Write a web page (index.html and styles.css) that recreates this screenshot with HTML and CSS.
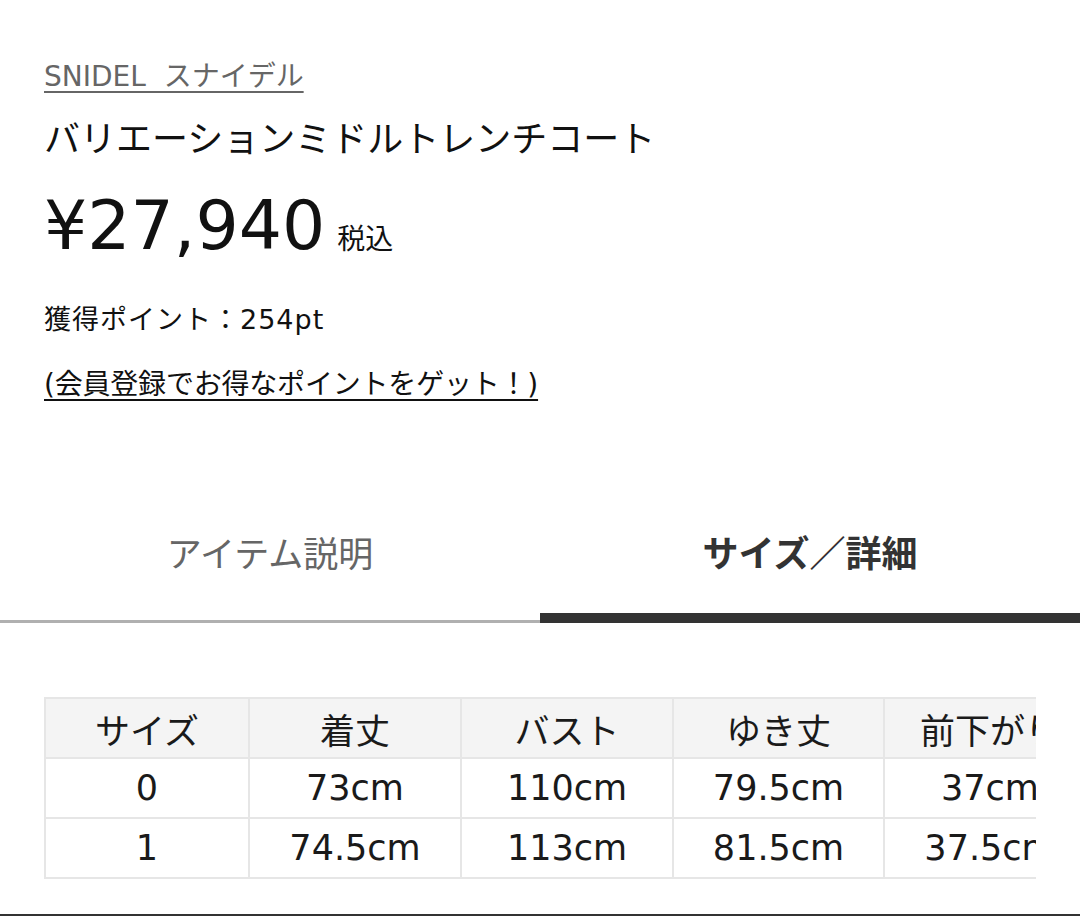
FILE: index.html
```html
<!DOCTYPE html>
<html lang="ja">
<head>
<meta charset="utf-8">
<title>バリエーションミドルトレンチコート</title>
<link rel="stylesheet" href="styles.css">
</head>
<body>
<div class="product">
  <a class="brand" href="#">SNIDEL&nbsp;&nbsp;スナイデル</a>
  <h1 class="title">バリエーションミドルトレンチコート</h1>
  <div class="price"><span class="amount">¥27,940</span><span class="tax">税込</span></div>
  <div class="points">獲得ポイント：254pt</div>
  <a class="signup" href="#">(会員登録でお得なポイントをゲット！)</a>
</div>
<div class="tabs">
  <div class="tab">アイテム説明</div>
  <div class="tab active">サイズ／詳細</div>
</div>
<div class="table-wrap">
  <table class="sizes">
    <tr class="head"><th>サイズ</th><th>着丈</th><th>バスト</th><th>ゆき丈</th><th>前下がり</th></tr>
    <tr><td>0</td><td>73cm</td><td>110cm</td><td>79.5cm</td><td>37cm</td></tr>
    <tr><td>1</td><td>74.5cm</td><td>113cm</td><td>81.5cm</td><td>37.5cm</td></tr>
  </table>
</div>
<div class="bottom-bar"></div>
</body>
</html>
```

FILE: styles.css
```css
html, body {
  margin: 0;
  padding: 0;
  background: #fff;
}
body {
  width: 1080px;
  height: 916px;
  overflow: hidden;
  font-family: "DejaVu Sans", "Noto Sans CJK JP", sans-serif;
  color: #1a1a1a;
}
.product {
  padding: 59px 44px 0;
  display: flex;
  flex-direction: column;
  align-items: flex-start;
}
.brand {
  font-size: 28px;
  line-height: 36px;
  color: #666;
  text-decoration: underline;
  text-decoration-thickness: 2px;
  text-underline-offset: 5px;
}
.title {
  margin: 21px 0 0;
  font-size: 36px;
  line-height: 48px;
  font-weight: normal;
  color: #111;
}
.price {
  margin-top: 22px;
  display: flex;
  align-items: baseline;
  height: 80px;
  line-height: 80px;
}
.amount {
  font-size: 68px;
  color: #111;
}
.tax {
  margin-left: 12px;
  font-size: 28px;
  color: #111;
}
.points {
  margin-top: 36px;
  font-size: 27px;
  line-height: 36px;
  color: #111;
  letter-spacing: 1px;
}
.signup {
  margin-top: 29px;
  font-size: 28px;
  line-height: 36px;
  color: #111;
  letter-spacing: -0.2px;
  text-decoration: underline;
  text-decoration-thickness: 2px;
  text-underline-offset: 5px;
}
.tabs {
  margin-top: 127px;
  display: flex;
  align-items: flex-end;
}
.tab {
  flex: 1;
  text-align: center;
  font-size: 35px;
  line-height: 50px;
  color: #666;
  padding-bottom: 40px;
  border-bottom: 3px solid #b0b0b0;
}
.tab.active {
  color: #333;
  font-size: 36px;
  font-weight: bold;
  padding-bottom: 33px;
  border-bottom: 10px solid #333;
}
.table-wrap {
  margin: 74px 44px 0;
  overflow: hidden;
}
.sizes {
  border-collapse: collapse;
  table-layout: fixed;
  width: 1051px;
}
.sizes th, .sizes td {
  border: 2px solid #e6e6e6;
  height: 58px;
  padding: 0;
  text-align: center;
  font-size: 35px;
  font-weight: normal;
  color: #1a1a1a;
  white-space: nowrap;
}
.sizes th:nth-child(1) { width: 202px; }
.sizes th:nth-child(2) { width: 210px; }
.sizes th:nth-child(3) { width: 210px; }
.sizes th:nth-child(4) { width: 209px; }
.sizes th:nth-child(5) { width: 210px; }
.sizes .head th {
  background: #f4f4f4;
}
.bottom-bar {
  margin-top: 35px;
  height: 4px;
  background: #333;
}
```
